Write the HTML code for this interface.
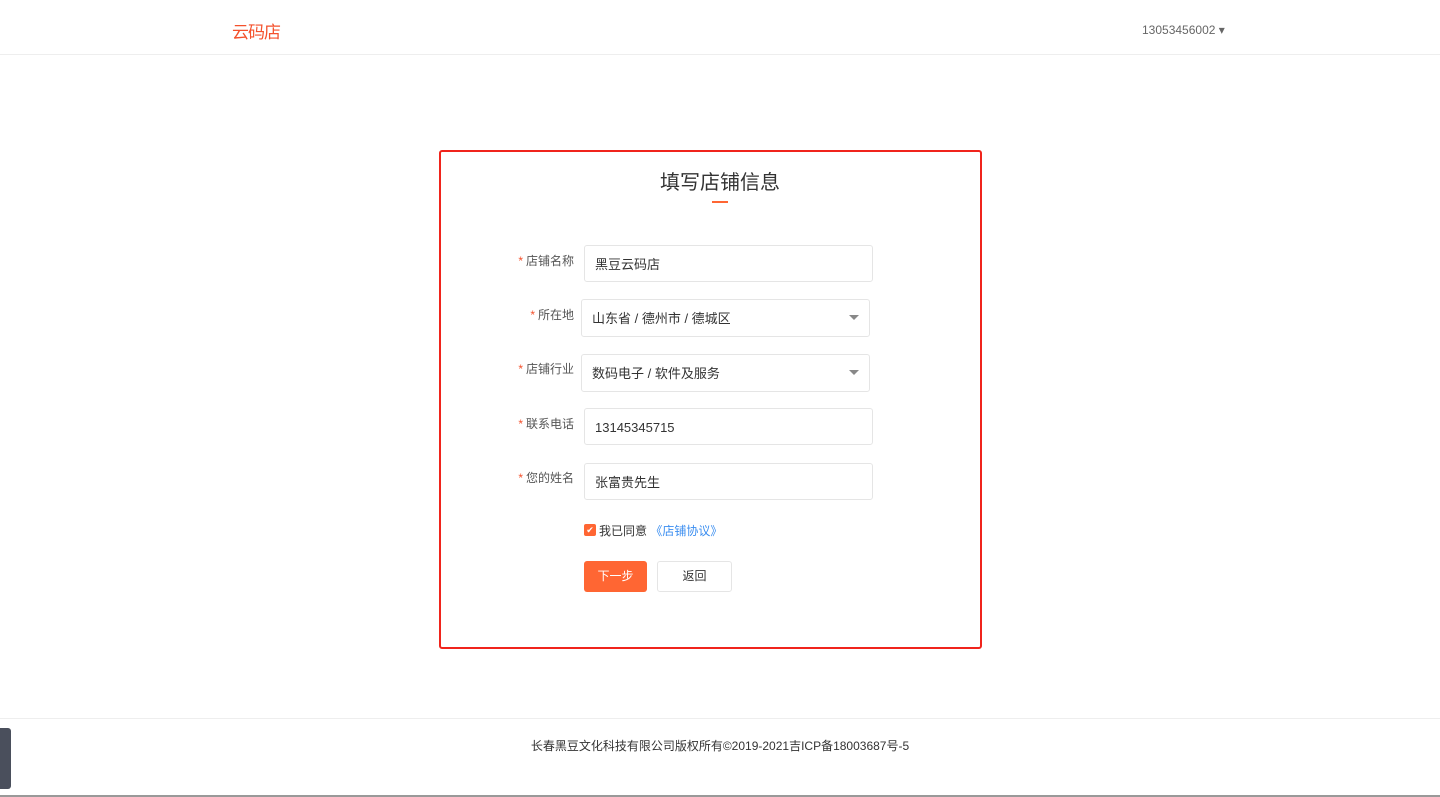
<!DOCTYPE html>
<html><head><meta charset="utf-8"><style>
*{margin:0;padding:0;box-sizing:border-box}
body{width:1440px;height:797px;background:#fff;font-family:"Liberation Sans","Noto Sans CJK SC",sans-serif;position:relative;overflow:hidden;color:#333}
.hdr{position:absolute;left:0;top:0;width:1440px;height:55px;border-bottom:1px solid #eee}
.logo{position:absolute;left:232px;top:18px;font-size:17px;color:#f4512c;letter-spacing:-1px}
.user{position:absolute;left:1142px;top:23px;font-size:12px;color:#666}
.box{position:absolute;left:439px;top:150px;width:543px;height:499px;border:2px solid #f0241c;border-radius:3px}
.title{position:absolute;left:0;width:100%;top:166px;text-align:center;font-size:20px;color:#333}
.line{position:absolute;left:712px;top:201px;width:16px;height:2px;background:#ff6633}
.lbl{position:absolute;font-size:12px;color:#555;text-align:right}
.lbl b{color:#f4512c;font-weight:normal;margin-right:3px}
.inp{position:absolute;border:1px solid #e5e5e5;border-radius:3px;height:37px;font-size:13px;color:#333;padding:0 10px;line-height:38px}
.arr{position:absolute;right:10px;top:15px;width:0;height:0;border-left:5px solid transparent;border-right:5px solid transparent;border-top:5px solid #888}
.foot{position:absolute;left:0;top:718px;width:1440px;border-top:1px solid #eee}
</style></head><body>
<div class="hdr"><div class="logo">云码<span style="color:#f4512c">店</span></div><div class="user">13053456002 ▾</div></div>
<div class="box"></div>
<div class="title">填写店铺信息</div><div class="line"></div>
<div class="lbl" style="left:500px;top:252px;width:74px"><b>*</b>店铺名称</div>
<div class="inp" style="left:584px;top:245px;width:289px">黑豆云码店</div>
<div class="lbl" style="left:500px;top:306px;width:74px"><b>*</b>所在地</div>
<div class="inp" style="left:581px;top:299px;width:289px;height:38px">山东省 / 德州市 / 德城区<div class="arr"></div></div>
<div class="lbl" style="left:500px;top:360px;width:74px"><b>*</b>店铺行业</div>
<div class="inp" style="left:581px;top:354px;width:289px;height:38px">数码电子 / 软件及服务<div class="arr"></div></div>
<div class="lbl" style="left:500px;top:415px;width:74px"><b>*</b>联系电话</div>
<div class="inp" style="left:584px;top:408px;width:289px">13145345715</div>
<div class="lbl" style="left:500px;top:469px;width:74px"><b>*</b>您的姓名</div>
<div class="inp" style="left:584px;top:463px;width:289px">张富贵先生</div>
<div style="position:absolute;left:584px;top:524px;width:12px;height:12px;background:#ff6633;border-radius:2px;color:#fff;font-size:9px;text-align:center;line-height:12px">✔</div>
<div style="position:absolute;left:599px;top:522px;font-size:12px;color:#333">我已同意 <span style="color:#3b8ef0">《店铺协议》</span></div>
<div style="position:absolute;left:584px;top:561px;width:63px;height:31px;background:#ff6633;border-radius:3px;color:#fff;font-size:12px;text-align:center;line-height:31px">下一步</div>
<div style="position:absolute;left:657px;top:561px;width:75px;height:31px;border:1px solid #e5e5e5;border-radius:3px;font-size:12px;text-align:center;line-height:29px">返回</div>
<div class="foot"></div>
<div style="position:absolute;left:0;width:1440px;top:737px;text-align:center;font-size:12px;color:#333">长春黑豆文化科技有限公司版权所有©2019-2021吉ICP备18003687号-5</div>
<div style="position:absolute;left:0;top:728px;width:11px;height:61px;background:#4a4f5c;border-radius:0 3px 3px 0"></div>
<div style="position:absolute;left:0;top:795px;width:1440px;height:2px;background:#999"></div>
</body></html>
